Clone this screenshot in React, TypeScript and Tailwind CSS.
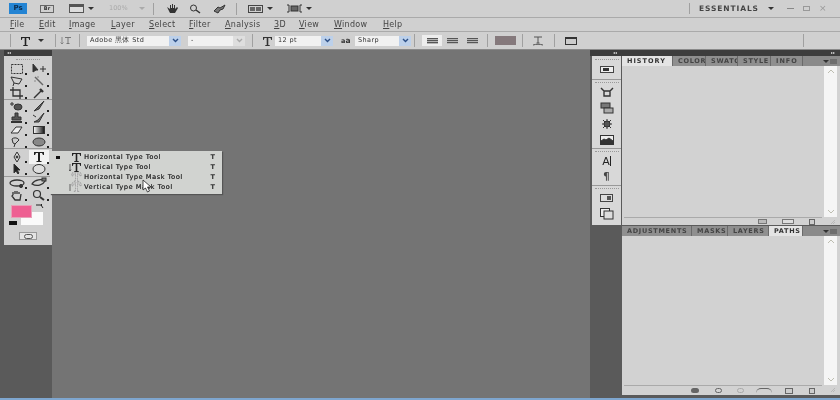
import type { ReactNode } from "react";

const font = "font-['DejaVu_Sans','Liberation_Sans',sans-serif]";

function Svg({ w = 14, h = 12, children, className = "" }: { w?: number; h?: number; children: ReactNode; className?: string }) {
  return (
    <svg width={w} height={h} viewBox={`0 0 ${w} ${h}`} fill="none" stroke="#333" strokeWidth="1" className={`block shrink-0 ${className}`}>
      {children}
    </svg>
  );
}

function Caret({ className = "" }: { className?: string }) {
  return <span className={`inline-block h-0 w-0 shrink-0 border-x-[3px] border-t-[3px] border-x-transparent border-t-[#333] ${className}`} />;
}

function Combo({ label, width, disabled }: { label: string; width: string; disabled?: boolean }) {
  return (
    <div className={`flex h-[10px] items-center justify-between bg-[#f1f1f1] pl-[3px] ${width}`}>
      <span className="whitespace-nowrap text-[6.5px] leading-none tracking-[0.4px] text-[#333]">{label}</span>
      <span className={`flex h-[10px] w-[12px] items-center justify-center ${disabled ? "bg-[#dedede]" : "bg-[#bcd0ea]"}`}>
        <svg width="7" height="5" viewBox="0 0 7 5" fill="none" stroke={disabled ? "#aaa" : "#2c4f86"} strokeWidth="1.4">
          <path d="M1 1l2.500 2.500L6 1" />
        </svg>
      </span>
    </div>
  );
}

function Sep({ className = "h-[13px]" }: { className?: string }) {
  return <span className={`w-px shrink-0 bg-[#a0a0a0] ${className}`} />;
}

const marquee = <Svg><rect x="1.5" y="1.5" width="11" height="9" strokeDasharray="2 1" /></Svg>;
const move = <Svg><path d="M1 1v8l3-2 2 0z" fill="#333" /><path d="M8 6h6M11 3v6" /></Svg>;
const lasso = <Svg><path d="M1 2l11 2-3 5-5-1z" /><path d="M4 8l-1 3" /></Svg>;
const wand = <Svg><path d="M3 2l8 8" strokeWidth="1.5" stroke="#666" /><path d="M2 6h2M6 1v2" stroke="#888" /></Svg>;
const crop = <Svg><path d="M3 0v9h10M0 3h10v9" strokeWidth="1.3" /></Svg>;
const dropper = <Svg><path d="M2 11l7-7" strokeWidth="1.4" /><path d="M8 2l3 3" strokeWidth="2.4" /></Svg>;
const heal = <Svg><path d="M0 4h4M2 2v4" /><ellipse cx="8" cy="7" rx="4" ry="3" fill="#555" /></Svg>;
const brush = <Svg><path d="M2 11l3-3 7-7-5 8z" fill="#666" /></Svg>;
const stamp = <Svg><path d="M5 1h3v4h3v3H2V5h3z" fill="#555" /><path d="M1 10h11" strokeWidth="2" /></Svg>;
const history = <Svg><path d="M2 10l4-2 6-7-5 9z" fill="#777" /><path d="M1 3l3 2" /></Svg>;
const eraser = <Svg><path d="M1 9l5-6h6l-4 6z" fill="#eee" /></Svg>;
const gradient = (
  <Svg>
    <defs>
      <linearGradient id="g">
        <stop offset="0" stopColor="#fff" />
        <stop offset="1" stopColor="#111" />
      </linearGradient>
    </defs>
    <rect x="1.5" y="2.5" width="11" height="7" fill="url(#g)" />
  </Svg>
);
const dodge = <Svg><path d="M2 3a4 3 0 0 1 7 1l-4 4-2-1z" fill="#ccc" /><path d="M5 8l-1 3" /></Svg>;
const sponge = <Svg><ellipse cx="7" cy="6" rx="6" ry="4" fill="#888" /></Svg>;
const pen = <Svg><path d="M7 1l3 5-3 5-3-5z" fill="#ddd" /><circle cx="7" cy="6" r="1" fill="#333" /></Svg>;
const typeIcon = <Svg h={12}><path d="M2 1h10v3h-1l-1-2H8v8h1.500v1h-5v-1H6V2H4L3 4H2z" fill="#222" stroke="none" /></Svg>;
const select = <Svg><path d="M4 1v9l2-2 2 3 1-1-2-3h3z" fill="#222" /></Svg>;
const ellipse = <Svg><ellipse cx="7" cy="6" rx="6" ry="4.500" fill="#ddd" /></Svg>;
const orbit = <Svg w={16}><ellipse cx="8" cy="6" rx="7" ry="3" strokeWidth="1.3" /><circle cx="12" cy="9" r="1.600" fill="#333" /></Svg>;
const orbit2 = <Svg w={16}><path d="M1 7c3-5 10-5 13-3-2 4-8 6-13 3z" strokeWidth="1.3" /><rect x="11" y="1" width="4" height="3" fill="#777" /></Svg>;
const hand = <Svg><path d="M3 6V3M5 5V2M7 5V2M9 5V3M3 6l-1 1 3 4h5l1-6" strokeWidth="1.3" /></Svg>;
const zoom = <Svg><circle cx="5" cy="5" r="3.500" strokeWidth="1.2" /><path d="M8 8l4 3" strokeWidth="2" /></Svg>;

function Tool({ icon, active }: { icon: ReactNode; active?: boolean }) {
  return (
    <div className={`relative flex w-[20px] items-center justify-center ${active ? "-my-px h-[14px] bg-[#f2f2f2]" : "h-[12px]"}`}>
      {icon}
      <span className="absolute bottom-0 right-0 h-[2px] w-[2px] bg-[#222]" />
    </div>
  );
}

function ToolGroup({ items, className }: { items: ReactNode[]; className: string }) {
  return <div className={`grid grid-cols-[20px_20px] justify-center gap-x-[2px] ${className}`}>{items}</div>;
}

function Grip() {
  return <div className="mx-auto h-[2px] w-[24px] border-t border-dotted border-[#999]" />;
}

function Tab({ label, active, width }: { label: string; active?: boolean; width: string }) {
  return (
    <div
      className={`flex h-[10px] shrink-0 items-center overflow-hidden whitespace-nowrap border-r border-[#6a6a6a] pl-[5px] text-[6.5px] font-bold leading-none ${width} ${
        active ? "bg-[#e4e4e4] text-[#333]" : "bg-[#8f8f8f] text-[#444]"
      }`}
    >
      {label}
    </div>
  );
}

function Panel({ tabs, footer, className, footerH }: { tabs: ReactNode; footer: ReactNode; className: string; footerH: string }) {
  return (
    <div className={`flex flex-col bg-[#d2d2d2] ${className}`}>
      <div className="flex h-[10px] shrink-0 items-center bg-[#8a8a8a]">
        {tabs}
        <div className="ml-auto flex items-center gap-[1px] pr-[3px]">
          <Caret />
          <span className="h-[5px] w-[7px] bg-[#6d6d6d]" />
        </div>
      </div>
      <div className="flex min-h-0 flex-1 pr-[3px]">
        <div className="flex-1" />
        <div className="flex w-[13px] flex-col items-center justify-between bg-[#f5f5f5] py-[3px]">
          <svg width="8" height="5" viewBox="0 0 8 5" fill="none" stroke="#bdbdb0"><path d="M1 4l3-3 3 3" /></svg>
          <svg width="8" height="5" viewBox="0 0 8 5" fill="none" stroke="#bdbdb0"><path d="M1 1l3 3 3-3" /></svg>
        </div>
      </div>
      <div className={`flex shrink-0 ${footerH}`}>
        <div className="ml-[2px] flex w-[198px] items-center justify-end border-t border-[#aaa] pr-[7px]">{footer}</div>
        <svg width="6" height="6" viewBox="0 0 6 6" stroke="#b8b8b8" className="ml-[8px] mt-[2px]"><path d="M1 5l4-4M3 5l2-2" /></svg>
      </div>
    </div>
  );
}

function MenuRow({ icon, label, checked }: { icon: ReactNode; label: string; checked?: boolean }) {
  return (
    <div className="flex h-[10px] items-center">
      <span className="flex w-[17px] justify-center pr-[2px]">{checked && <span className="h-[3px] w-[4px] bg-[#111]" />}</span>
      <span className="flex w-[17px] justify-center">{icon}</span>
      <span className="flex-1 whitespace-nowrap text-[6.5px] leading-none tracking-[0.6px] text-[#333] [text-shadow:0.2px_0_0_#333]">{label}</span>
      <span className="pr-[7px] text-[6.500px] font-bold leading-none text-[#333]">T</span>
    </div>
  );
}

const bigT = "M3 1h9v3h-.7l-.8-2H8.300v7h1.400v1H5.300V9h1.400V2H4.500l-.8 2H3z";
const rowT = <Svg w={14} h={10}><path d={bigT} fill="#222" stroke="none" /></Svg>;
const rowTV = (
  <Svg w={14} h={10}>
    <path d={bigT} fill="#222" stroke="none" />
    <path d="M1 2v7M0 7.500l1 1.500 1-1.500" strokeWidth="0.7" />
  </Svg>
);
const rowM = <Svg w={14} h={10}><path d={bigT} fill="#e6e6e6" stroke="#666" strokeWidth="0.6" strokeDasharray="1 0.6" /></Svg>;
const rowMV = (
  <Svg w={14} h={10}>
    <path d={bigT} fill="#e6e6e6" stroke="#666" strokeWidth="0.6" strokeDasharray="1 0.6" />
    <path d="M1 2v7" strokeWidth="0.7" />
  </Svg>
);

const menuItems = ["File", "Edit", "Image", "Layer", "Select", "Filter", "Analysis", "3D", "View", "Window", "Help"];
const menuGaps = ["w-[29px]", "w-[30px]", "w-[42px]", "w-[38px]", "w-[40px]", "w-[36px]", "w-[49px]", "w-[25px]", "w-[35px]", "w-[49px]", "w-[30px]"];

function DockIcon({ children }: { children: ReactNode }) {
  return <div className="flex h-[16px] items-center justify-center">{children}</div>;
}

function Lines({ className }: { className: string }) {
  return <span className={`h-[6px] w-[11px] shrink-0 bg-[repeating-linear-gradient(#555_0_1px,#b4b4b4_1px_2px)] ${className}`} />;
}

export default function App() {
  return (
    <div className="h-[400px] w-[840px] overflow-hidden bg-[#d0d0d0]">
      <div className={`${font} relative flex h-[400px] w-[840px] flex-col overflow-hidden bg-[#d0d0d0] text-[#333] blur-[0.35px]`}>
        {/* app bar */}
        <div className="flex h-[18px] shrink-0 items-center border-b border-[#aaa] pl-[9px]">
          <span className="flex h-[11px] w-[18px] shrink-0 items-center justify-center bg-[#2484d3] text-[7px] font-bold leading-none text-[#0c2b4d]">Ps</span>
          <span className="ml-[13px] flex h-[8px] w-[14px] shrink-0 items-center justify-center border border-[#666] text-[5px] font-bold leading-none">Br</span>
          <span className="ml-[15px] h-[9px] w-[15px] shrink-0 border border-t-[3px] border-[#555] bg-[#ddd]" />
          <Caret className="ml-[4px]" />
          <span className="ml-[15px] w-[18px] text-[6.5px] leading-none text-[#aaa]">100%</span>
          <Caret className="ml-[12px] border-t-[#aaa]" />
          <Sep className="ml-[8px] h-[12px]" />
          <svg width="14" height="10" viewBox="0 0 14 10" fill="#333" className="ml-[12px] shrink-0"><path d="M1 3l3 2V1h1v3h1V0h1v4h1V1h1v4l2-2 1 1-3 5H4z" /></svg>
          <span className="ml-[9px]"><Svg w={12} h={10}><circle cx="4.500" cy="4" r="3" /><path d="M7 6l4 3" strokeWidth="1.500" /></Svg></span>
          <span className="ml-[12px]"><Svg w={14} h={10}><path d="M1 7l4-4 2 1 5-3-2 4-3 1-2 3z" fill="#777" /></Svg></span>
          <Sep className="ml-[9px] h-[12px]" />
          <span className="ml-[11px] flex h-[8px] w-[15px] shrink-0 gap-px border border-[#444] p-px"><span className="flex-1 bg-[#666]" /><span className="flex-1 bg-[#666]" /></span>
          <Caret className="ml-[4px]" />
          <span className="ml-[14px]"><Svg w={15} h={9}><path d="M2 1H0M2 1v7H0M13 1h2M13 1v7h2" /><rect x="4" y="2" width="7" height="5" fill="#666" /></Svg></span>
          <Caret className="ml-[4px]" />
          <div className="ml-auto flex h-[18px] w-[151px] shrink-0 items-center">
            <Sep className="h-[11px]" />
            <span className="ml-[9px] w-[61px] whitespace-nowrap text-[7.5px] font-bold leading-none tracking-[0.9px] text-[#444]">ESSENTIALS</span>
            <Caret className="ml-[8px]" />
            <span className="ml-[13px] h-px w-[7px] bg-[#888]" />
            <span className="ml-[9px] h-[5px] w-[7px] border border-[#999]" />
            <span className="ml-[9px] text-[9px] leading-none text-[#999]">×</span>
          </div>
        </div>

        {/* menu bar */}
        <div className="flex h-[14px] shrink-0 items-center border-b border-[#aaa] pl-[10px]">
          {menuItems.map((item, i) => (
            <span key={item} className={`whitespace-nowrap text-[8px] leading-none tracking-[0.3px] text-[#444] ${menuGaps[i]}`}>
              <span className="underline">{item[0]}</span>
              {item.slice(1)}
            </span>
          ))}
        </div>

        {/* options bar */}
        <div className="flex h-[18px] shrink-0 items-center border-b border-[#8a8a8a] pl-[10px]">
          <Sep />
          <span className="ml-[9px] flex w-[11px] justify-center"><Svg w={11} h={10}><path d="M1 1h9v3h-.7l-.8-2H6.300v7h1.400v1H3.300V9h1.400V2H2.500l-.8 2H1z" fill="#222" stroke="none" /></Svg></span>
          <Caret className="ml-[7px]" />
          <Sep className="ml-[11px] h-[13px]" />
          <span className="ml-[3px] flex w-[14px] justify-center"><Svg w={12} h={9}><path d="M2 1v7M0.500 6.500L2 8l1.500-1.500" stroke="#777" strokeWidth="0.8" /><path d="M5 1.500h6M8 1.500v6M6.500 7.500h3" stroke="#777" /></Svg></span>
          <Sep className="ml-[6px] h-[13px]" />
          <div className="ml-[7px]"><Combo label="Adobe 黑体 Std" width="w-[94px]" /></div>
          <div className="ml-[7px]"><Combo label="-" width="w-[57px]" disabled /></div>
          <Sep className="ml-[7px] h-[13px]" />
          <span className="ml-[9px] flex w-[11px] justify-center"><Svg w={11} h={10}><path d="M1 1h9v3h-.7l-.8-2H6.300v7h1.400v1H3.300V9h1.400V2H2.500l-.8 2H1z" fill="#333" stroke="none" /></Svg></span>
          <div className="ml-[2px]"><Combo label="12 pt" width="w-[58px]" /></div>
          <span className="ml-[8px] w-[10px] whitespace-nowrap text-[6.5px] font-bold leading-none">a<span className="text-[7.5px]">a</span></span>
          <div className="ml-[4px]"><Combo label="Sharp" width="w-[56px]" /></div>
          <Sep className="ml-[3px] h-[13px]" />
          <span className="ml-[7px] flex h-[11px] w-[20px] shrink-0 items-center justify-center bg-[#ededed]"><Lines className="" /></span>
          <Lines className="ml-[5px]" />
          <Lines className="ml-[9px]" />
          <Sep className="ml-[9px] h-[13px]" />
          <span className="ml-[7px] h-[9px] w-[21px] shrink-0 bg-[#85797c]" />
          <Sep className="ml-[6px] h-[13px]" />
          <span className="ml-[8px]"><Svg w={14} h={10}><path d="M3 1h8M7 1v6M5.500 7h3M2 9c3-1 7-1 10 0" stroke="#555" /></Svg></span>
          <Sep className="ml-[9px] h-[13px]" />
          <span className="ml-[10px] h-[8px] w-[12px] shrink-0 border border-t-2 border-[#333] bg-[#ccc]" />
          <Sep className="ml-[226px] h-[13px]" />
        </div>

        {/* workspace */}
        <div className="flex min-h-0 flex-1 border-b-[2px] border-[#7ea6cf] bg-[#5a5a5a]">
          {/* tools */}
          <div className="flex w-[52px] shrink-0 flex-col pl-[4px]">
            <div className="flex h-[6px] shrink-0 items-center bg-[#3d3d3d] pl-[3px] text-[4px] leading-none text-[#ddd]">◂◂</div>
            <div className="flex h-[189px] w-[48px] flex-col bg-[#d0d0d0] pt-[3px]">
              <Grip />
              <ToolGroup className="border-b border-[#9a9a9a] pt-[2px]" items={[marquee, move, lasso, wand, crop, dropper].map((ic, i) => <Tool key={i} icon={ic} />)} />
              <ToolGroup className="border-b border-[#9a9a9a]" items={[heal, brush, stamp, history, eraser, gradient, dodge, sponge].map((ic, i) => <Tool key={i} icon={ic} />)} />
              <ToolGroup className="border-b border-[#9a9a9a] pb-[1px] pt-[2px]" items={[<Tool key="p" icon={pen} />, <Tool key="t" icon={typeIcon} active />, <Tool key="s" icon={select} />, <Tool key="e" icon={ellipse} />]} />
              <ToolGroup className="" items={[<Tool key="o" icon={orbit} />, <Tool key="o2" icon={orbit2} />, <Tool key="h" icon={hand} />, <Tool key="z" icon={zoom} />]} />
              <div className="relative mt-[4px] h-[27px]">
                <span className="absolute left-[17px] top-[7px] h-[13px] w-[22px] bg-[#fafafa]" />
                <span className="absolute left-[7px] top-0 h-[13px] w-[21px] border border-[#e8a0b8] bg-[#ee5f92]" />
                <span className="absolute left-[5px] top-[16px] h-[4px] w-[8px] bg-[#111]" />
                <svg width="9" height="5" viewBox="0 0 9 5" fill="none" stroke="#222" className="absolute left-[31px] top-[-1px]"><path d="M1 1h5l2 3M6 0l1 1-1 1" /></svg>
              </div>
              <div className="mx-auto flex h-[8px] w-[18px] items-center justify-center border border-[#999] bg-[#e4e4e4]">
                <span className="h-[5px] w-[9px] rounded-full border border-[#555]" />
              </div>
            </div>
          </div>

          {/* canvas */}
          <div className="w-[538px] shrink-0 bg-[#747474]" />

          {/* icon dock */}
          <div className="flex w-[250px] shrink-0 flex-col">
            <div className="flex h-[6px] shrink-0 items-center justify-between bg-[#3d3d3d] pl-[23px] pr-[5px] text-[4px] leading-none text-[#ddd]">
              <span>◂◂</span>
              <span>▸▸</span>
            </div>
            <div className="flex min-h-0 flex-1">
              <div className="ml-[2px] w-[29px] shrink-0">
                <div className="flex h-[169px] flex-col bg-[#d8d8d8] pt-px">
                  <div className="border-b border-[#999] pb-[2px] pt-[2px]">
                    <Grip />
                    <DockIcon><span className="flex h-[7px] w-[14px] items-center border border-[#444] bg-[#eee] pl-[2px]"><span className="h-[3px] w-[6px] bg-[#333]" /></span></DockIcon>
                  </div>
                  <div className="border-b border-[#999] pt-[2px]">
                    <Grip />
                    <DockIcon><Svg w={14} h={12}><path d="M1 2l3 3h6l3-3M4 5v5h6V5" strokeWidth="1.400" /></Svg></DockIcon>
                    <DockIcon><Svg w={14} h={12}><rect x="1" y="1" width="9" height="5" fill="#777" /><rect x="4" y="6" width="9" height="5" fill="#aaa" /></Svg></DockIcon>
                    <DockIcon><Svg w={14} h={12}><path d="M7 1v10M2 6h10M3 2l8 8M11 2l-8 8" /><circle cx="7" cy="6" r="3" fill="#555" /></Svg></DockIcon>
                    <DockIcon><Svg w={14} h={10}><rect x="0.500" y="0.500" width="13" height="9" fill="#eee" /><path d="M1 9V6l3-2 2 1 3-2 4 3v3z" fill="#333" /></Svg></DockIcon>
                  </div>
                  <div className="border-b border-[#999] pt-[2px]">
                    <Grip />
                    <DockIcon><span className="flex items-center text-[11px] leading-none text-[#222]">A<span className="h-[10px] w-px bg-[#222]" /></span></DockIcon>
                    <DockIcon><span className="text-[10px] font-bold leading-none text-[#444]">¶</span></DockIcon>
                  </div>
                  <div className="pt-[2px]">
                    <Grip />
                    <DockIcon><span className="flex h-[8px] w-[13px] items-center justify-end border border-[#444] bg-[#ddd] pr-px"><span className="h-[4px] w-[4px] bg-[#555]" /></span></DockIcon>
                    <DockIcon><Svg w={14} h={12}><rect x="0.500" y="0.500" width="9" height="8" fill="#eee" /><rect x="4" y="3" width="9" height="8" fill="#ddd" /></Svg></DockIcon>
                  </div>
                </div>
              </div>

              {/* panels */}
              <div className="ml-px flex min-w-0 flex-1 flex-col gap-px">
                <Panel
                  className="h-[169px] shrink-0"
                  footerH="h-[8px]"
                  tabs={
                    <>
                      <Tab label="HISTORY" active width="w-[51px] tracking-[1px]" />
                      <Tab label="COLOR" width="w-[33px] tracking-[0.7px]" />
                      <Tab label="SWATC" width="w-[32px] tracking-[0.7px]" />
                      <Tab label="STYLE" width="w-[33px] tracking-[0.7px]" />
                      <Tab label="INFO" width="w-[32px] tracking-[1px]" />
                    </>
                  }
                  footer={
                    <>
                      <span className="h-[5px] w-[9px] border border-[#777] bg-[#bbb]" />
                      <span className="ml-[15px] h-[5px] w-[12px] border border-[#777] bg-[#ddd]" />
                      <span className="ml-[15px] h-[6px] w-[6px] border border-[#666] bg-[#ccc]" />
                    </>
                  }
                />
                <Panel
                  className="min-h-0 flex-1"
                  footerH="h-[10px]"
                  tabs={
                    <>
                      <Tab label="ADJUSTMENTS" width="w-[70px] tracking-[0.7px]" />
                      <Tab label="MASKS" width="w-[36px] tracking-[0.7px]" />
                      <Tab label="LAYERS" width="w-[41px] tracking-[0.7px]" />
                      <Tab label="PATHS" active width="w-[34px] tracking-[0.7px]" />
                    </>
                  }
                  footer={
                    <>
                      <span className="h-[5px] w-[8px] rounded-full bg-[#666]" />
                      <span className="ml-[16px] h-[5px] w-[7px] rounded-full border border-[#666]" />
                      <span className="ml-[15px] h-[5px] w-[7px] rounded-full border border-[#aaa]" />
                      <span className="ml-[12px] h-[5px] w-[16px] rounded-t-full border-t border-[#666]" />
                      <span className="ml-[13px] h-[6px] w-[8px] border border-[#666] bg-[#ccc]" />
                      <span className="ml-[16px] h-[6px] w-[6px] border border-[#666] bg-[#ccc]" />
                    </>
                  }
                />
                <div className="h-[2px] shrink-0" />
              </div>
            </div>
          </div>
        </div>

        {/* type tool flyout */}
        <div className="absolute left-[50px] top-[151px] flex h-[43px] w-[172px] flex-col bg-[#d1d3d0] pt-px shadow-[1px_1px_1px_#555]">
          <MenuRow icon={rowT} label="Horizontal Type Tool" checked />
          <MenuRow icon={rowTV} label="Vertical Type Tool" />
          <MenuRow icon={rowM} label="Horizontal Type Mask Tool" />
          <MenuRow icon={rowMV} label="Vertical Type Mask Tool" />
        </div>

        {/* cursor */}
        <svg width="11" height="14" viewBox="0 0 11 14" className="absolute left-[142px] top-[179px]">
          <path d="M1 1v10l2.500-2 2 4 2-1-2-4h3.500z" fill="#fff" stroke="#222" strokeWidth="0.8" />
        </svg>
      </div>
    </div>
  );
}
